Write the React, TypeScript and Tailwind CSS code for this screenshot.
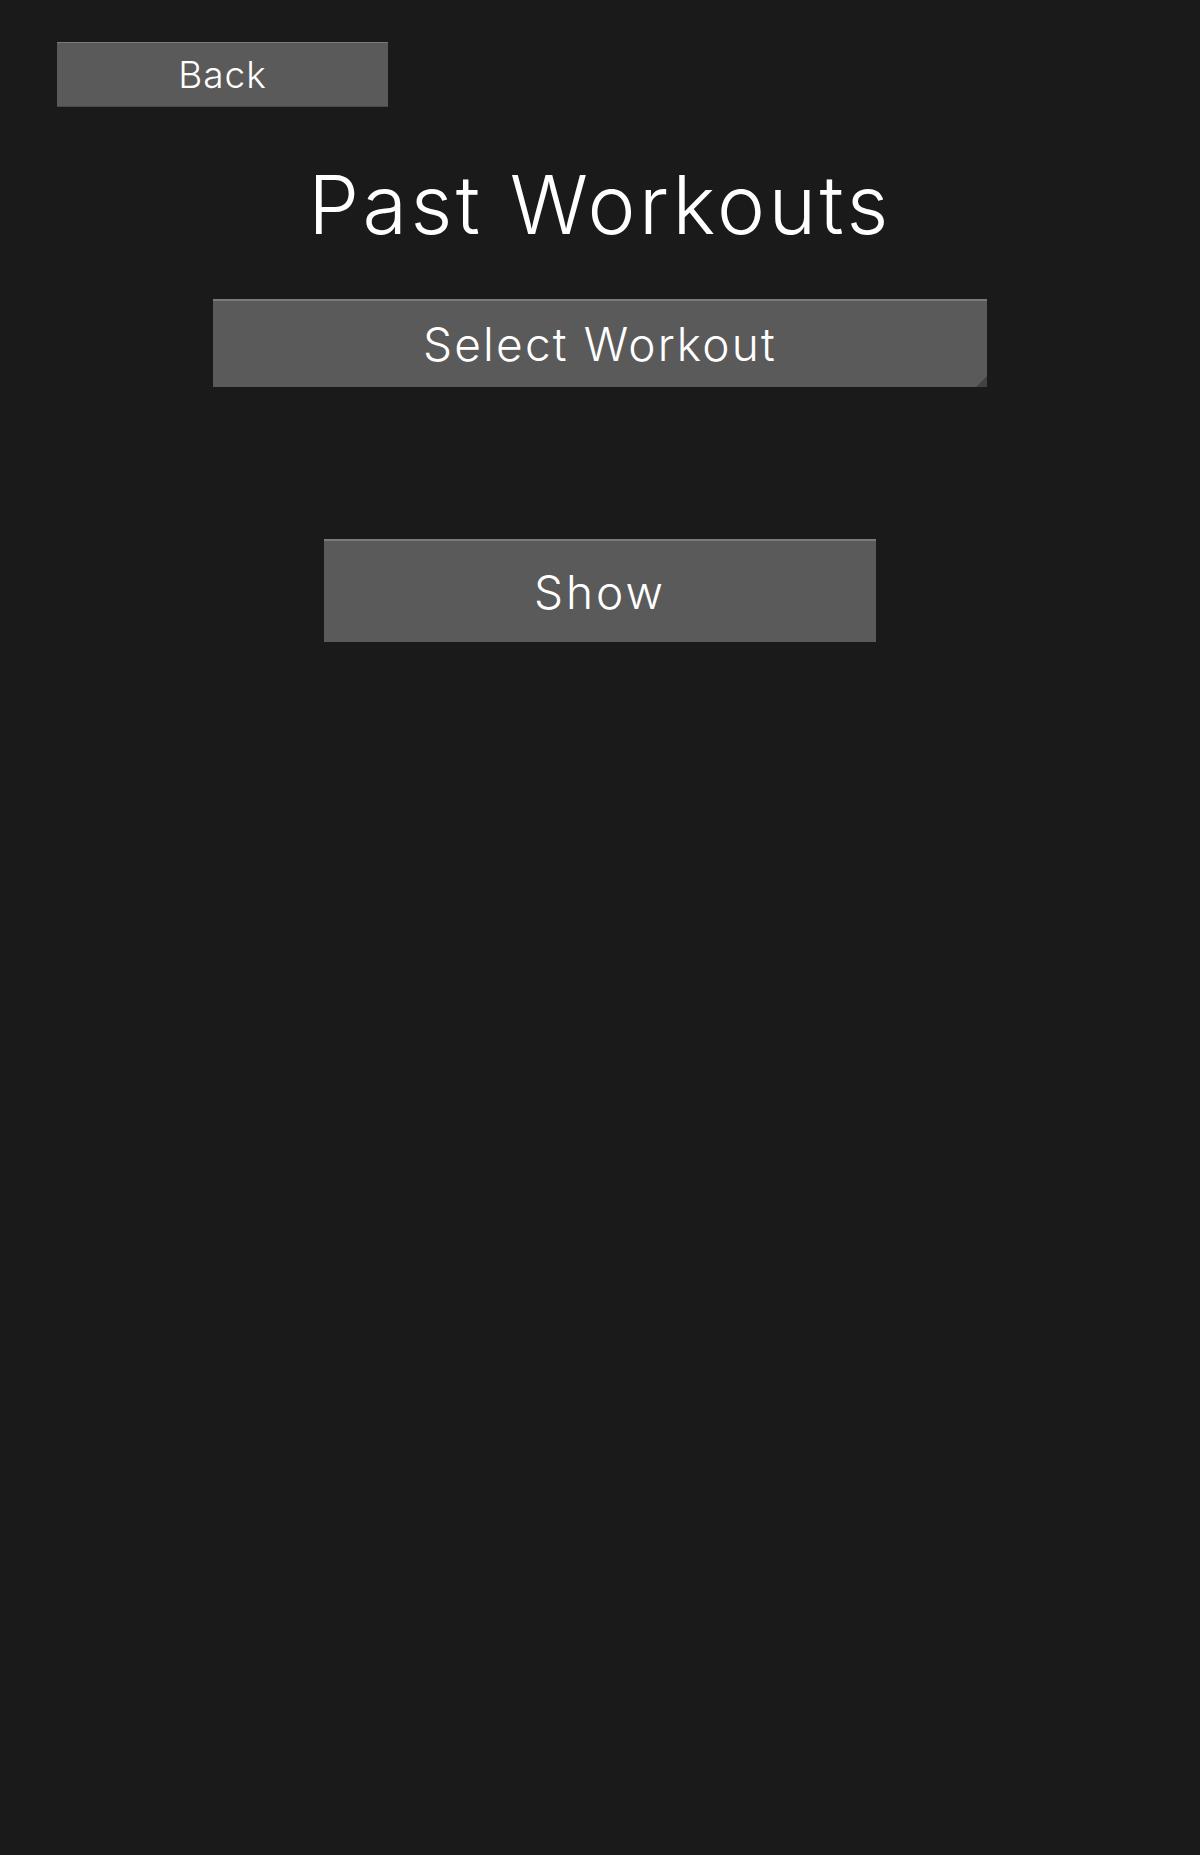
import React from "react";

const font = { fontFamily: "Inter, 'Open Sans', sans-serif" };

export default function App() {
  return (
    <div
      className="min-h-[1855px] w-full bg-[#1a1a1a] pt-[42px] text-white font-light"
      style={font}
    >
      <button className="ml-[57px] flex h-[65px] w-[331px] items-center justify-center border-t border-t-[#7a7a7a] border-b border-b-[#4a4a4a] bg-[#5a5a5a] text-[37px] leading-none tracking-[1px] text-white">
        Back
      </button>

      <h1 className="mt-[58px] text-center text-[81px] font-light leading-none tracking-[3.5px]">
        Past Workouts
      </h1>

      <div className="relative mx-auto mt-[53px] flex h-[88px] w-[774px] items-center justify-center border-t-2 border-t-[#7a7a7a] bg-[#5a5a5a] text-[46px] leading-none tracking-[2.2px]">
        Select Workout
        <svg
          className="absolute bottom-0 right-0"
          width="11"
          height="11"
          viewBox="0 0 11 11"
        >
          <polygon points="11,0 11,11 0,11" fill="#424242" />
        </svg>
      </div>

      <div className="mt-[152px] flex justify-center">
        <button className="flex h-[103px] w-[552px] items-center justify-center border-t-2 border-t-[#7a7a7a] bg-[#5a5a5a] text-[46px] leading-none tracking-[3px] text-white">
          Show
        </button>
      </div>
    </div>
  );
}
